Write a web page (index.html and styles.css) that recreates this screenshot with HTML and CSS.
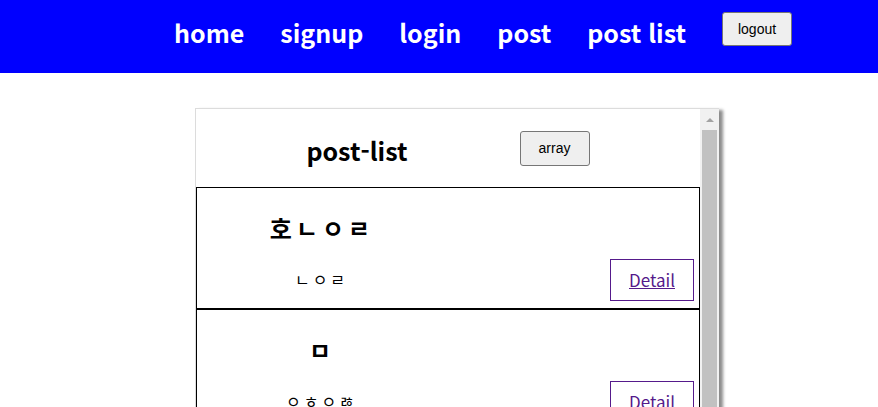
FILE: index.html
```html
<!DOCTYPE html>
<html lang="ko">
<head>
<meta charset="utf-8">
<title>post-list</title>
<link rel="stylesheet" href="styles.css">
</head>
<body>
<header class="topbar">
  <nav class="nav">
    <a class="nav-link" href="#">home</a>
    <a class="nav-link" href="#">signup</a>
    <a class="nav-link" href="#">login</a>
    <a class="nav-link" href="#">post</a>
    <a class="nav-link" href="#">post list</a>
    <button class="btn btn-logout" type="button">logout</button>
  </nav>
</header>
<main class="main">
  <section class="panel">
    <div class="panel-body">
      <div class="list-head">
        <h2 class="list-title">post-list</h2>
        <button class="btn" type="button">array</button>
      </div>
      <article class="card">
        <div class="card-left">
          <h3 class="card-title">호ㄴㅇㄹ</h3>
          <p class="card-text">ㄴㅇㄹ</p>
        </div>
        <div class="card-right">
          <a class="detail" href="#">Detail</a>
        </div>
      </article>
      <article class="card">
        <div class="card-left">
          <h3 class="card-title">ㅁ</h3>
          <p class="card-text">ㅇㅎㅇㅀ</p>
        </div>
        <div class="card-right">
          <a class="detail" href="#">Detail</a>
        </div>
      </article>
    </div>
    <div class="scrollbar">
      <div class="scroll-arrow"></div>
      <div class="scroll-thumb"></div>
    </div>
  </section>
</main>
</body>
</html>
```

FILE: styles.css
```css
html, body {
  margin: 0;
  padding: 0;
  background: #fff;
  overflow: hidden;
}

body {
  font-family: "Noto Sans CJK KR", "Noto Sans", sans-serif;
  color: #000;
}

.topbar {
  background: #0000ff;
  height: 73px;
}

.nav {
  display: flex;
  align-items: flex-start;
  padding: 12px 0 0 174px;
  gap: 36px;
}

.nav-link {
  color: #fff;
  text-decoration: none;
  font-weight: 700;
  font-size: 25px;
  line-height: 32px;
  margin-top: 4px;
}

.btn {
  font-family: "Liberation Sans", Arial, sans-serif;
  font-size: 14px;
  color: #000;
  background: #efefef;
  border: 1px solid #767676;
  border-radius: 3px;
  width: 70px;
  height: 35px;
  padding: 0;
}

.btn-logout {
  height: 34px;
}

.main {
  padding: 35px 0 0 195px;
}

.panel {
  display: flex;
  width: 523px;
  height: 330px;
  border: 1px solid #dcdcdc;
  border-right: 0;
  box-shadow: 4px 2px 3px rgba(0, 0, 0, 0.45);
  overflow: hidden;
}

.panel-body {
  width: 504px;
}

.list-head {
  display: flex;
  align-items: center;
  justify-content: center;
  gap: 112px;
  height: 78px;
}

.list-title {
  margin: 0;
  font-size: 25px;
  font-weight: 700;
  line-height: 32px;
  padding-top: 4px;
}

.card {
  display: flex;
  border: 1px solid #000;
  height: 120px;
}

.card-left {
  width: 246px;
  text-align: center;
  padding-top: 25px;
}

.card-title {
  margin: 0;
  font-size: 24px;
  font-weight: 700;
  line-height: 30px;
  letter-spacing: 4px;
  text-indent: 4px;
}

.card-text {
  margin: 26px 0 0;
  font-size: 16px;
  line-height: 20px;
  letter-spacing: 3px;
  text-indent: 3px;
}

.card-right {
  flex: 1;
  display: flex;
  justify-content: flex-end;
  align-items: flex-end;
  padding: 0 5px 7px 0;
}

.detail {
  display: block;
  border: 1px solid #551a8b;
  color: #551a8b;
  font-size: 17px;
  line-height: 40px;
  padding: 0 18px;
  text-decoration: underline;
}

.scrollbar {
  width: 19px;
  background: #f1f1f1;
  display: flex;
  flex-direction: column;
  align-items: center;
}

.scroll-arrow {
  margin-top: 9px;
  width: 0;
  height: 0;
  border-left: 4px solid transparent;
  border-right: 4px solid transparent;
  border-bottom: 4px solid #a3a3a3;
}

.scroll-thumb {
  margin-top: 8px;
  width: 15px;
  flex: 1;
  background: #c1c1c1;
}
```
